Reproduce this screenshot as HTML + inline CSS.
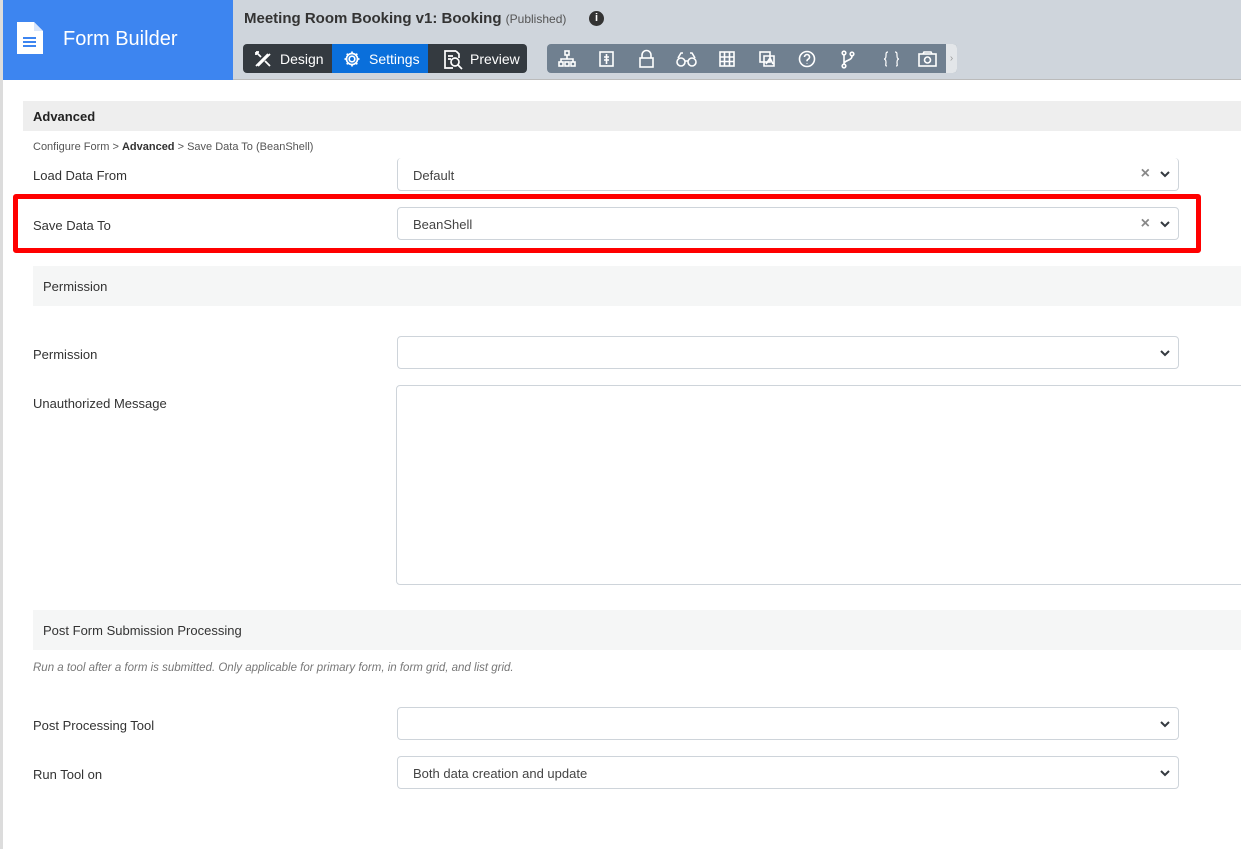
<!DOCTYPE html>
<html><head><meta charset="utf-8"><style>
*{box-sizing:border-box;margin:0;padding:0}
body{width:1241px;height:849px;overflow:hidden;background:#fff;font-family:"Liberation Sans",sans-serif;font-size:13px;color:#333;position:relative}
.a{position:absolute}
.lbl{position:absolute;left:33px;font-size:13px;color:#333}
.sel{position:absolute;left:397px;width:782px;height:33px;border:1px solid #ced4da;border-radius:4px;background:#fff;font-size:13px;color:#444;padding:9px 15px}
.chev{position:absolute;right:8px;top:13px}
.x{position:absolute;right:28px;top:7px;color:#888;font-size:16px;font-weight:bold}
.sec{position:absolute;left:33px;width:1208px;height:40px;background:#f5f6f6;padding:13px 10px;font-size:13px;color:#333}
</style></head><body>
<div class="a" style="left:0;top:0;width:3px;height:849px;background:#dcdcdc"></div>
<div class="a" style="left:3px;top:0;width:230px;height:80px;background:#3d85f0"></div>
<svg class="a" style="left:17px;top:22px" width="26" height="32" viewBox="0 0 26 32"><path d="M0 0H17L26 9V32H0Z" fill="#fff"/><path d="M17 0V9H26" fill="#d9e6fb"/><rect x="6" y="15" width="13" height="2" fill="#3d85f0"/><rect x="6" y="19" width="13" height="2" fill="#3d85f0"/><rect x="6" y="23" width="13" height="2" fill="#3d85f0"/></svg>
<div class="a" style="left:63px;top:28px;font-size:20px;color:#fff">Form Builder</div>
<div class="a" style="left:233px;top:0;width:1008px;height:80px;background:#cfd5dc;border-bottom:1px solid #bbb"></div>
<div class="a" style="left:244px;top:10px;font-size:15px;font-weight:bold;color:#333">Meeting Room Booking v1: Booking <span style="font-weight:normal;font-size:12px;color:#555">(Published)</span></div>
<div class="a" style="left:589px;top:11px;width:15px;height:15px;border-radius:50%;background:#333;color:#fff;font-size:11px;font-weight:bold;text-align:center;line-height:15px">i</div>
<div class="a" style="left:243px;top:44px;width:284px;height:29px;background:#343a40;border-radius:4px"></div>
<div class="a" style="left:332px;top:44px;width:96px;height:29px;background:#0a6fdb"></div>
<svg class="a" style="left:254px;top:50px" width="18" height="18" viewBox="0 0 18 18" fill="none" stroke="#fff" stroke-width="1.8"><path d="M2 16L14 4M4 16L16 4M2 2l5 5M11 11l5 5M2 2h3M2 2v3"/></svg>
<div class="a" style="left:280px;top:51px;color:#fff;font-size:14px">Design</div>
<svg class="a" style="left:343px;top:50px" width="18" height="18" viewBox="0 0 18 18" fill="none" stroke="#fff" stroke-width="1.7"><circle cx="9" cy="9" r="2.8"/><path d="M9 1.5v2.5M9 14v2.5M1.5 9h2.5M14 9h2.5M3.7 3.7l1.8 1.8M12.5 12.5l1.8 1.8M3.7 14.3l1.8-1.8M12.5 5.5l1.8-1.8"/><circle cx="9" cy="9" r="5.5"/></svg>
<div class="a" style="left:369px;top:51px;color:#fff;font-size:14px">Settings</div>
<svg class="a" style="left:442px;top:49px" width="22" height="22" viewBox="0 0 22 22" fill="none" stroke="#fff" stroke-width="1.7"><path d="M14 2H3v17h8"/><path d="M14 2l3 3v4"/><circle cx="13" cy="13" r="4"/><path d="M16 16l4 4"/><path d="M6 7h5M6 10h3"/></svg>
<div class="a" style="left:470px;top:51px;color:#fff;font-size:14px">Preview</div>
<div class="a" style="left:547px;top:44px;width:410px;height:29px;background:#708090;border-radius:4px"></div>
<div class="a" style="left:946px;top:44px;width:11px;height:29px;background:#e3e6e9;border-radius:0 4px 4px 0;color:#999;font-size:10px;line-height:29px;text-align:center">›</div>
<svg class="a" style="left:557px;top:49px" width="385" height="20" viewBox="0 0 385 20" fill="none" stroke="#fff" stroke-width="1.6">
<rect x="8" y="2" width="4" height="4"/><rect x="2" y="13" width="4" height="4"/><rect x="8" y="13" width="4" height="4"/><rect x="14" y="13" width="4" height="4"/><path d="M10 6v4M4 13v-3h12v3"/>
<rect x="43" y="3" width="13" height="14"/><path d="M49.5 5v10M47 8h5M47 11h5"/>
<rect x="83" y="9" width="13" height="9"/><path d="M85 9V6a4.5 4.5 0 0 1 9 0v3"/>
<circle cx="124" cy="13" r="4"/><circle cx="135" cy="13" r="4"/><path d="M121 9l3-5h2M138 9l-3-5h-2M128 12h3"/>
<rect x="163" y="3" width="14" height="14"/><path d="M163 8h14M163 12.5h14M167.5 3v14M172.5 3v14"/>
<rect x="203" y="3" width="10" height="10"/><path d="M207 7h10v10H207zM209 15l4-6 3 6"/>
<circle cx="250" cy="10" r="7.5"/><path d="M247.5 8a2.5 2.5 0 1 1 3.5 2.3c-1 .5-1 1-1 2M250 14.5v.5"/>
<circle cx="287" cy="4" r="1.8"/><circle cx="295" cy="5" r="1.8"/><circle cx="287" cy="17" r="1.8"/><path d="M287 6v9M295 7c0 5-8 4-8 8"/>
<path d="M331 3c-2 0-2 1-2 4s-2 3-2 3 2 0 2 3-1 4 1 4M338 3c2 0 2 1 2 4s2 3 2 3-2 0-2 3 1 4-1 4" stroke-width="1.2"/>
<rect x="362" y="5" width="17" height="12"/><circle cx="370.5" cy="11" r="3"/><path d="M366 5l1-2h7l1 2"/>
</svg>
<div class="a" style="left:23px;top:101px;width:1218px;height:30px;background:#eee;padding:8px 10px;font-weight:bold;font-size:13px;color:#222">Advanced</div>
<div class="a" style="left:33px;top:141px;font-size:11px;color:#555">Configure Form &gt; <b style="color:#333">Advanced</b> &gt; Save Data To (BeanShell)</div>
<div class="lbl" style="top:168px">Load Data From</div>
<div class="sel" style="top:158px;height:33px;border-top:none;padding-top:10px">Default<span class="x" style="top:7px">×</span><svg class="chev" width="10" height="7" viewBox="0 0 10 7"><path d="M1 1l4 4 4-4" stroke="#343a40" stroke-width="2" fill="none"/></svg></div>
<div class="a" style="left:13px;top:194px;width:1188px;height:59px;border:5px solid #f00;border-radius:3px"></div>
<div class="lbl" style="top:218px">Save Data To</div>
<div class="sel" style="top:207px">BeanShell<span class="x">×</span><svg class="chev" width="10" height="7" viewBox="0 0 10 7"><path d="M1 1l4 4 4-4" stroke="#343a40" stroke-width="2" fill="none"/></svg></div>
<div class="sec" style="top:266px">Permission</div>
<div class="lbl" style="top:347px">Permission</div>
<div class="sel" style="top:336px"><svg class="chev" width="10" height="7" viewBox="0 0 10 7"><path d="M1 1l4 4 4-4" stroke="#343a40" stroke-width="2" fill="none"/></svg></div>
<div class="lbl" style="top:396px">Unauthorized Message</div>
<div class="a" style="left:396px;top:385px;width:850px;height:200px;border:1px solid #ced4da;border-radius:4px"></div>
<div class="sec" style="top:610px">Post Form Submission Processing</div>
<div class="a" style="left:33px;top:662px;font-size:11.5px;font-style:italic;color:#777">Run a tool after a form is submitted. Only applicable for primary form, in form grid, and list grid.</div>
<div class="lbl" style="top:718px">Post Processing Tool</div>
<div class="sel" style="top:707px"><svg class="chev" width="10" height="7" viewBox="0 0 10 7"><path d="M1 1l4 4 4-4" stroke="#343a40" stroke-width="2" fill="none"/></svg></div>
<div class="lbl" style="top:767px">Run Tool on</div>
<div class="sel" style="top:756px">Both data creation and update<svg class="chev" width="10" height="7" viewBox="0 0 10 7"><path d="M1 1l4 4 4-4" stroke="#343a40" stroke-width="2" fill="none"/></svg></div>
</body></html>
